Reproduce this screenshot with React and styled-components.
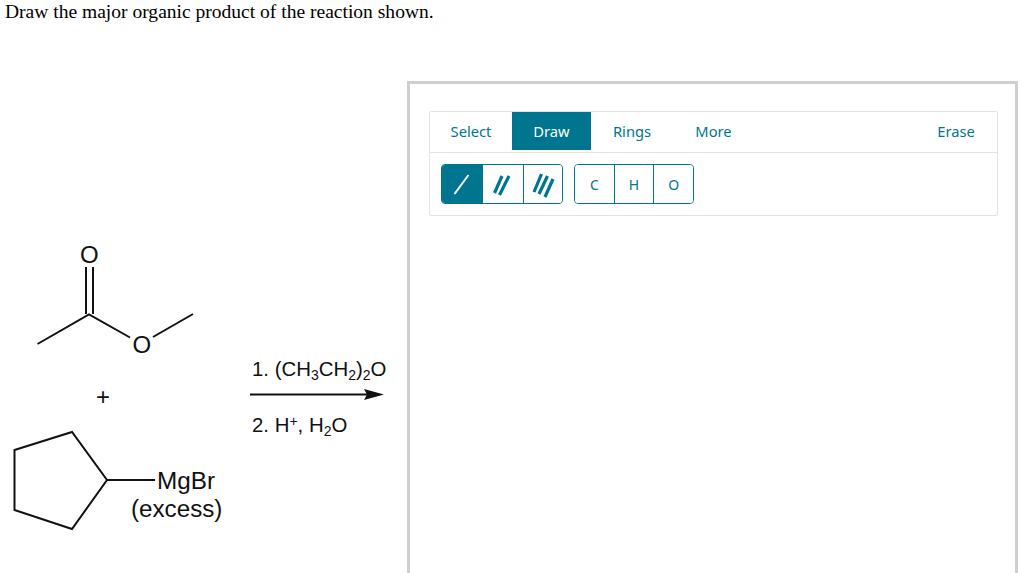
import * as React from 'react';
import styled, { createGlobalStyle } from 'styled-components';

const TEAL = '#00758f';

const Global = createGlobalStyle`
    html, body { margin: 0; padding: 0; height: 573px; overflow: hidden; background: #ffffff; }
`;

const Page = styled.div`
    width: 1024px;
    height: 573px;
    overflow: hidden;
`;

const Question = styled.div`
    height: 81px;
    padding: 0 0 0 5px;
    font-family: "Liberation Serif", serif;
    font-size: 19.55px;
    line-height: 24px;
    color: #000000;
`;

const Body = styled.div`
    display: flex;
    align-items: flex-start;
`;

const Scheme = styled.svg`
    display: block;
    flex: none;
    width: 407px;
    height: 492px;
    text {
        font-family: "Liberation Sans", sans-serif;
        fill: #111111;
    }
`;

const Panel = styled.div`
    flex: none;
    box-sizing: border-box;
    width: 611px;
    height: 560px;
    padding: 27px 19px 0 19px;
    border: 3px solid #cfcfcf;
`;

const Toolbar = styled.div`
    width: 569px;
    box-sizing: border-box;
    border: 1px solid #e2e2e2;
    border-radius: 2px;
`;

const TabRow = styled.div`
    display: flex;
    justify-content: space-between;
    height: 41px;
    box-sizing: border-box;
    padding-bottom: 2px;
    border-bottom: 1px solid #e2e2e2;
`;

const TabGroup = styled.div`
    display: flex;
`;

const Tab = styled.div`
    display: flex;
    align-items: center;
    justify-content: center;
    width: ${p => p.$w}px;
    font-family: "Noto Sans", sans-serif;
    font-size: 14.7px;
    color: ${p => (p.$active ? '#ffffff' : TEAL)};
    background: ${p => (p.$active ? TEAL : 'transparent')};
`;

const ToolRow = styled.div`
    display: flex;
    gap: 11px;
    height: 62px;
    box-sizing: border-box;
    padding: 11px 0 0 11px;
`;

const ToolGroup = styled.div`
    display: flex;
    box-sizing: border-box;
    width: ${p => p.$w}px;
    height: 40px;
    border: 1px solid ${TEAL};
    border-radius: 4px;
    overflow: hidden;
`;

const ToolButton = styled.div`
    flex: 1;
    display: flex;
    align-items: center;
    justify-content: center;
    box-sizing: border-box;
    font-family: "Noto Sans", sans-serif;
    font-size: 14px;
    color: ${TEAL};
    background: ${p => (p.$active ? TEAL : '#ffffff')};
    & + & { border-left: 1px solid ${TEAL}; }
`;

const BondIcon = ({ lines, color, width }) => (
    <svg width="40" height="38" viewBox="0 0 40 38">
        {lines.map(([x1, y1, x2, y2], i) => (
            <line key={i} x1={x1} y1={y1} x2={x2} y2={y2} stroke={color} strokeWidth={width} />
        ))}
    </svg>
);

const App = () => (
    <Page>
        <Global />
        <Question>Draw the major organic product of the reaction shown.</Question>
        <Body>
            <Scheme viewBox="0 81 407 492">
                <g stroke="#111111" strokeWidth="2" fill="none">
                    <line x1="86" y1="267" x2="86" y2="314" />
                    <line x1="93" y1="267" x2="93" y2="314" />
                    <polyline points="37.5,344 89,314.5 130,337.5" />
                    <line x1="153" y1="337" x2="193" y2="314" />
                    <polygon points="14.5,450 72,432 107,480 72,529 14.5,510" />
                    <line x1="107" y1="480" x2="155" y2="480" />
                    <line x1="250" y1="394.5" x2="370" y2="394.5" />
                </g>
                <polygon points="364,389 384,394.5 364,400 367,394.5" fill="#111111" />
                <text x="80" y="263" fontSize="24">O</text>
                <text x="132.5" y="353" fontSize="24">O</text>
                <text x="96" y="405" fontSize="24">+</text>
                <text x="157" y="489" fontSize="24.3">MgBr</text>
                <text x="131" y="517" fontSize="24.2">(excess)</text>
                <text x="252" y="376" fontSize="20.4">
                    1. (CH<tspan fontSize="14" dy="4">3</tspan><tspan dy="-4">CH</tspan><tspan fontSize="14" dy="4">2</tspan><tspan dy="-4">)</tspan><tspan fontSize="14" dy="4">2</tspan><tspan dy="-4">O</tspan>
                </text>
                <text x="252" y="432" fontSize="20.4">
                    2. H<tspan fontSize="14" dy="-6">+</tspan><tspan dy="6">, H</tspan><tspan fontSize="14" dy="4">2</tspan><tspan dy="-4">O</tspan>
                </text>
            </Scheme>
            <Panel>
                <Toolbar>
                    <TabRow>
                        <TabGroup>
                            <Tab $w={82}>Select</Tab>
                            <Tab $w={79} $active>Draw</Tab>
                            <Tab $w={82}>Rings</Tab>
                            <Tab $w={81}>More</Tab>
                        </TabGroup>
                        <Tab $w={82}>Erase</Tab>
                    </TabRow>
                    <ToolRow>
                        <ToolGroup $w={122}>
                            <ToolButton $active>
                                <BondIcon color="#ffffff" width={2} lines={[[12.5, 29, 26.5, 10]]} />
                            </ToolButton>
                            <ToolButton>
                                <BondIcon color={TEAL} width={3.2} lines={[[11.5, 28, 19, 11], [16.5, 30, 26, 11]]} />
                            </ToolButton>
                            <ToolButton>
                                <BondIcon color={TEAL} width={3.2} lines={[[10, 27, 17.5, 9], [15, 29, 23.5, 11], [21, 32, 29, 14]]} />
                            </ToolButton>
                        </ToolGroup>
                        <ToolGroup $w={120}>
                            <ToolButton>C</ToolButton>
                            <ToolButton>H</ToolButton>
                            <ToolButton>O</ToolButton>
                        </ToolGroup>
                    </ToolRow>
                </Toolbar>
            </Panel>
        </Body>
    </Page>
);

export default App;
